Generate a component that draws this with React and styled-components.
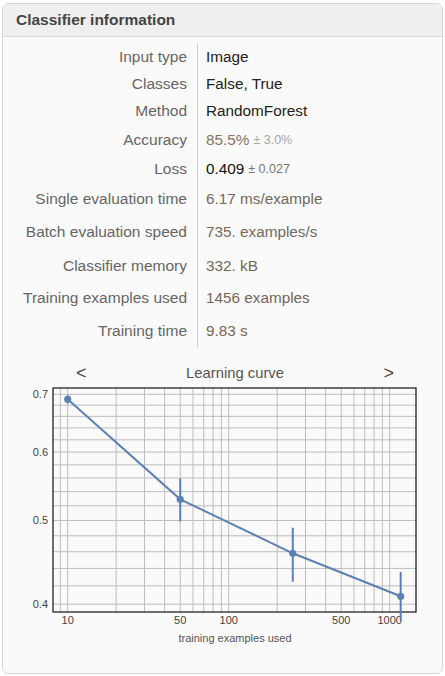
import React from 'react';
import styled, { createGlobalStyle } from 'styled-components';

const GlobalStyle = createGlobalStyle`
  html, body {
    margin: 0;
    padding: 0;
    background: #ffffff;
  }
  body {
    font-family: "Liberation Sans", Arial, sans-serif;
  }
`;

const Panel = styled.div`
  box-sizing: border-box;
  margin: 3px 2px 0;
  height: 671px;
  border: 1px solid #d6d6d6;
  border-radius: 6px;
  background: #fafafa;
  overflow: hidden;
  display: flex;
  flex-direction: column;
`;

const Header = styled.div`
  height: 32px;
  padding-left: 13px;
  display: flex;
  align-items: center;
  background: #efefef;
  border-bottom: 1px solid #dadada;
  color: #444;
  font-size: 15.5px;
  font-weight: bold;
`;

const Table = styled.div`
  display: grid;
  grid-template-columns: 195px 1fr;
  padding-top: 6px;
`;

const Label = styled.div`
  height: ${(p) => p.h}px;
  display: flex;
  align-items: center;
  justify-content: flex-end;
  padding-right: 10px;
  border-right: 1px solid #cfcfcf;
  color: #666;
  font-size: 15.5px;
  white-space: nowrap;
`;

const Value = styled.div`
  height: ${(p) => p.h}px;
  display: flex;
  align-items: center;
  padding-left: 8px;
  font-size: 15.3px;
  white-space: nowrap;
  color: ${(p) => p.color || '#222'};
`;

const Pm = styled.span`
  font-size: 12.5px;
  margin-left: 4px;
  color: ${(p) => p.color};
`;

const NavRow = styled.div`
  margin: 13px 0 0 50px;
  width: 363px;
  height: 24px;
  box-sizing: border-box;
  padding: 0 22px 0 23px;
  display: flex;
  align-items: center;
  justify-content: space-between;
`;

const Arrow = styled.span`
  font-size: 18px;
  color: #444;
  line-height: 1;
`;

const ChartTitle = styled.span`
  font-size: 14.8px;
  color: #555;
`;

const ChartSvg = styled.svg`
  display: block;
  font-family: "Liberation Sans", Arial, sans-serif;
`;

const rows = [
  { label: 'Input type', h: 27, value: 'Image' },
  { label: 'Classes', h: 27, value: 'False, True' },
  { label: 'Method', h: 28, value: 'RandomForest' },
  { label: 'Accuracy', h: 29, value: '85.5%', color: '#8a7360', pm: '± 3.0%', pmColor: '#a8a8a8' },
  { label: 'Loss', h: 29, value: '0.409', color: '#111', pm: '± 0.027', pmColor: '#777' },
  { label: 'Single evaluation time', h: 32, value: '6.17 ms/example', color: '#74675b' },
  { label: 'Batch evaluation speed', h: 34, value: '735. examples/s', color: '#74675b' },
  { label: 'Classifier memory', h: 33, value: '332. kB', color: '#74675b' },
  { label: 'Training examples used', h: 32, value: '1456 examples', color: '#74675b' },
  { label: 'Training time', h: 34, value: '9.83 s', color: '#74675b' },
];

// log-log axes, svg coords
const X = (v) => 64.7 + 161 * Math.log10(v / 10);
const Y = (v) => 9.3 + 375 * Math.log(0.7 / v);

const F = { x1: 50, x2: 413, y1: 3, y2: 227 };
const BLUE = '#5e81b5';

const vLines = [9, 10, 20, 30, 40, 50, 60, 70, 80, 90, 100, 200, 300, 400, 500, 600, 700, 800, 900, 1000];
const hLines = Array.from({ length: 16 }, (_, i) => 0.4 + i * 0.02);

const points = [
  { x: 64.7, y: 14.3, lo: 10.3, hi: 18.3 },
  { x: X(50), y: 114.3, lo: 93.3, hi: 136.3 },
  { x: X(250), y: 168.3, lo: 142.7, hi: 196.7 },
  { x: 397.7, y: 211.3, lo: 187, hi: 235.6 },
];

const Chart = () => (
  <ChartSvg width="439" height="265" viewBox="0 0 439 265">
    <defs>
      <clipPath id="plot">
        <rect x="0" y="0" width={F.x2 + 10} height="240" />
      </clipPath>
    </defs>
    {vLines.map((v) => (
      <line key={'v' + v} x1={X(v)} x2={X(v)} y1={F.y1} y2={F.y2} stroke="#bdbdbd" strokeWidth="1" />
    ))}
    {hLines.map((v) => (
      <line key={'h' + v} x1={F.x1} x2={F.x2} y1={Y(v)} y2={Y(v)} stroke="#bdbdbd" strokeWidth="1" />
    ))}
    <rect x={F.x1} y={F.y1} width={F.x2 - F.x1} height={F.y2 - F.y1} fill="none" stroke="#111" strokeWidth="1.2" />
    {[0.7, 0.6, 0.5, 0.4].map((v) => (
      <text key={'yl' + v} x="45" y={Y(v) + 4} textAnchor="end" fontSize="11" fill="#444">
        {v.toFixed(1)}
      </text>
    ))}
    {[10, 50, 100, 500, 1000].map((v) => (
      <text key={'xl' + v} x={X(v)} y="239" textAnchor="middle" fontSize="11" fill="#444">
        {v}
      </text>
    ))}
    <text x="232" y="257" textAnchor="middle" fontSize="11" fill="#555">
      training examples used
    </text>
    <g clipPath="url(#plot)">
      <polyline
        points={points.map((p) => `${p.x},${p.y}`).join(' ')}
        fill="none"
        stroke={BLUE}
        strokeWidth="2"
      />
      {points.map((p, i) => (
        <g key={i}>
          <line x1={p.x} x2={p.x} y1={p.lo} y2={p.hi} stroke={BLUE} strokeWidth="2" />
          <circle cx={p.x} cy={p.y} r="3.6" fill={BLUE} />
        </g>
      ))}
    </g>
  </ChartSvg>
);

const App = () => (
  <>
    <GlobalStyle />
    <Panel>
      <Header>Classifier information</Header>
      <Table>
        {rows.map((r) => (
          <React.Fragment key={r.label}>
            <Label h={r.h}>{r.label}</Label>
            <Value h={r.h} color={r.color}>
              {r.value}
              {r.pm && <Pm color={r.pmColor}>{r.pm}</Pm>}
            </Value>
          </React.Fragment>
        ))}
      </Table>
      <NavRow>
        <Arrow>&lt;</Arrow>
        <ChartTitle>Learning curve</ChartTitle>
        <Arrow>&gt;</Arrow>
      </NavRow>
      <Chart />
    </Panel>
  </>
);

export default App;
